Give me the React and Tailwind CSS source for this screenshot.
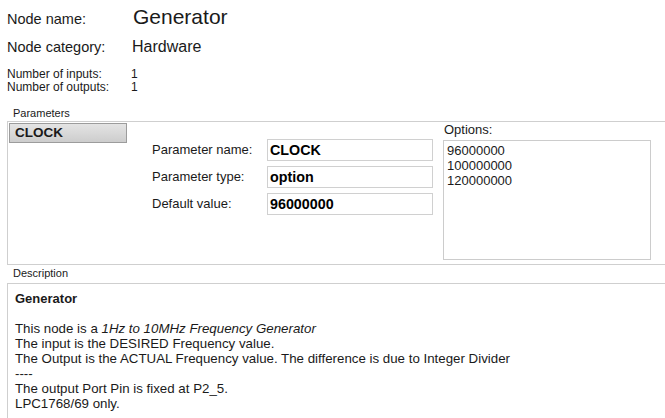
import React from 'react';

const font = { fontFamily: '"Liberation Sans", Arial, sans-serif' };

const params = [
  { label: 'Parameter name:', value: 'CLOCK' },
  { label: 'Parameter type:', value: 'option' },
  { label: 'Default value:', value: '96000000' },
];

const options = ['96000000', '100000000', '120000000'];

export default function App() {
  return (
    <div className="w-[665px] h-[418px] overflow-hidden bg-white text-[#1a1a1a]" style={font}>
      {/* node header */}
      <div className="pl-[7px] pt-[5px]">
        <div className="flex items-baseline h-[24px]">
          <span className="w-[126px] text-[14.5px]">Node name:</span>
          <span className="text-[21px] leading-[24px]">Generator</span>
        </div>
        <div className="mt-[8px] flex items-baseline h-[20px]">
          <span className="w-[125px] text-[14.5px]">Node category:</span>
          <span className="text-[16px] leading-[20px]">Hardware</span>
        </div>
        <div className="mt-[11px] grid grid-cols-[124px_1fr] text-[12px] leading-[13px]">
          <span>Number of inputs:</span>
          <span>1</span>
          <span>Number of outputs:</span>
          <span>1</span>
        </div>
      </div>

      {/* parameters */}
      <div className="mt-[13px] ml-[13px] text-[11px] leading-[12px]">Parameters</div>
      <div className="mt-[2px] ml-[7px] h-[144px] border-y border-l border-[#cfcfcf] flex">
        <div className="w-[144px] pl-[1px] pt-[1px]">
          <div className="w-[118px] h-[20px] border border-[#9c9c9c] bg-gradient-to-b from-[#e4e4e4] to-[#cdcdcd] pl-[5px] text-[13.5px] font-bold leading-[18px]">
            CLOCK
          </div>
        </div>

        <div className="pt-[17px] grid grid-cols-[115px_166px] auto-rows-[22px] gap-y-[5px] items-center">
          {params.map((p) => (
            <React.Fragment key={p.label}>
              <span className="text-[13px] leading-[22px]">{p.label}</span>
              <div className="h-[22px] border border-[#d0d0d0] pl-[2px] text-[14.3px] font-bold leading-[21px] text-black">
                {p.value}
              </div>
            </React.Fragment>
          ))}
        </div>

        <div className="ml-[10px] w-[208px]">
          <div className="pl-[1px] text-[13px] leading-[15px]">Options:</div>
          <div className="mt-[3px] h-[120px] border border-[#cccccc] pl-[3px] pt-[2px] text-[13px] leading-[15px]">
            {options.map((o) => (
              <div key={o}>{o}</div>
            ))}
          </div>
        </div>
      </div>

      {/* description */}
      <div className="mt-[2px] ml-[13px] text-[11px] leading-[12px]">Description</div>
      <div className="mt-[4px] ml-[7px] h-[140px] border-t border-l border-[#cfcfcf] pl-[7px] pt-[7px] text-[13.3px] leading-[15px]">
        <div className="font-bold text-[13px]">Generator</div>
        <div className="h-[15px]" />
        <div>
          This node is a <i>1Hz to 10MHz Frequency Generator</i>
        </div>
        <div>The input is the DESIRED Frequency value.</div>
        <div>The Output is the ACTUAL Frequency value. The difference is due to Integer Divider</div>
        <div>----</div>
        <div>The output Port Pin is fixed at P2_5.</div>
        <div>LPC1768/69 only.</div>
      </div>
    </div>
  );
}
